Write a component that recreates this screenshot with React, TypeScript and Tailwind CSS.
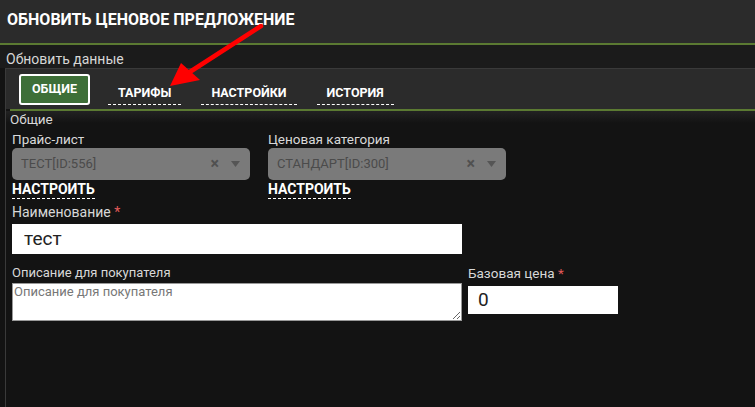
import React from "react";

const tabs = ["ТАРИФЫ", "НАСТРОЙКИ", "ИСТОРИЯ"];

function SelectBox({ value }: { value: string }) {
  return (
    <div className="flex h-[32px] w-[238px] items-center rounded-[5px] bg-[#7a7a7a] pl-[9px] pr-[10px] text-[13px] text-[#4b4b4b]">
      <span className="flex-1">{value}</span>
      <span className="mr-[12px] text-[16px] font-bold leading-none text-[#505050]">×</span>
      <svg width="9" height="6" viewBox="0 0 9 6">
        <path d="M0 0h9L4.5 6z" fill="#555" />
      </svg>
    </div>
  );
}

function PickField({ label, value }: { label: string; value: string }) {
  return (
    <div className="flex flex-col">
      <span className="text-[13.5px] leading-[16px] text-[#d8d8d8]">{label}</span>
      <div className="mt-[1px]">
        <SelectBox value={value} />
      </div>
      <span className="mt-[1px] w-fit border-b border-dashed border-white pb-[1px] text-[14px] font-bold leading-[16px] text-white">
        НАСТРОИТЬ
      </span>
    </div>
  );
}

export default function App() {
  return (
    <div className="relative h-[407px] w-[755px] overflow-hidden bg-[#131313] font-['Roboto',sans-serif]">
      <div className="flex h-[45px] items-center border-b-2 border-[#5b7a32] bg-[#2b2b2b] pb-[3px] pl-[7px]">
        <h1 className="text-[16px] font-bold text-white">ОБНОВИТЬ ЦЕНОВОЕ ПРЕДЛОЖЕНИЕ</h1>
      </div>
      <div className="flex h-[23px] items-end bg-[#1b1b1b] pb-[1px] pl-[6px] text-[14px] leading-[16px] text-[#d6d6d6]">
        Обновить данные
      </div>
      <div className="ml-[5px] border-l border-t border-[#3a3a3a] bg-[#131313]">
        <div className="flex h-[40px] items-center bg-[#2b2b2b] pl-[13px]">
          <div className="flex h-[31px] w-[71px] items-center justify-center rounded-[3px] border-2 border-white bg-[#3e6f38] text-[12.5px] font-bold text-white">
            ОБЩИЕ
          </div>
          <div className="ml-[18px] flex gap-[20px]">
            {tabs.map((t) => (
              <span
                key={t}
                className="mt-[13px] border-b border-dashed border-white px-[10px] pb-[4px] text-[12.5px] font-bold leading-[14px] text-white"
              >
                {t}
              </span>
            ))}
          </div>
        </div>
        <div className="ml-[4px] h-[2px] bg-[#5b7a32]" />
        <div className="bg-[linear-gradient(#222,#131313_12px)] pl-[4px] text-[13.5px] leading-[16px] text-[#d8d8d8]">
          Общие
        </div>
        <div className="pl-[6px] pt-[4px]">
          <div className="flex gap-[18px]">
            <PickField label="Прайс-лист" value="ТЕСТ[ID:556]" />
            <PickField label="Ценовая категория" value="СТАНДАРТ[ID:300]" />
          </div>
          <div className="mt-[5px] text-[14px] leading-[16px] text-[#d8d8d8]">
            Наименование <span className="text-[#e05a5a]">*</span>
          </div>
          <div className="mt-[4px] flex h-[30px] w-[450px] items-center bg-white pl-[12px] text-[19px] text-[#222]">
            тест
          </div>
          <div className="mt-[11px] flex gap-[6px]">
            <div className="flex flex-col">
              <span className="text-[13px] leading-[16px] text-[#d8d8d8]">Описание для покупателя</span>
              <textarea
                readOnly
                placeholder="Описание для покупателя"
                className="mt-[2px] h-[38px] w-[450px] border border-[#999] bg-white px-[1px] text-[13px] leading-[15px] text-[#222] placeholder:text-[#777]"
              />
            </div>
            <div className="flex flex-col">
              <span className="text-[13.5px] leading-[16px] text-[#d8d8d8]">
                Базовая цена <span className="text-[#e05a5a]">*</span>
              </span>
              <div className="mt-[5px] flex h-[28px] w-[150px] items-center bg-white pl-[10px] text-[19px] text-[#222]">
                0
              </div>
            </div>
          </div>
        </div>
        <div className="h-[200px]" />
      </div>
      <svg className="absolute left-0 top-0" width="755" height="407" viewBox="0 0 755 407">
        <line x1="261" y1="26" x2="182" y2="77" stroke="#ff0000" strokeWidth="4.5" strokeLinecap="round" />
        <path d="M170 86 L181 63 L200 80 Z" fill="#ff0000" />
      </svg>
    </div>
  );
}
